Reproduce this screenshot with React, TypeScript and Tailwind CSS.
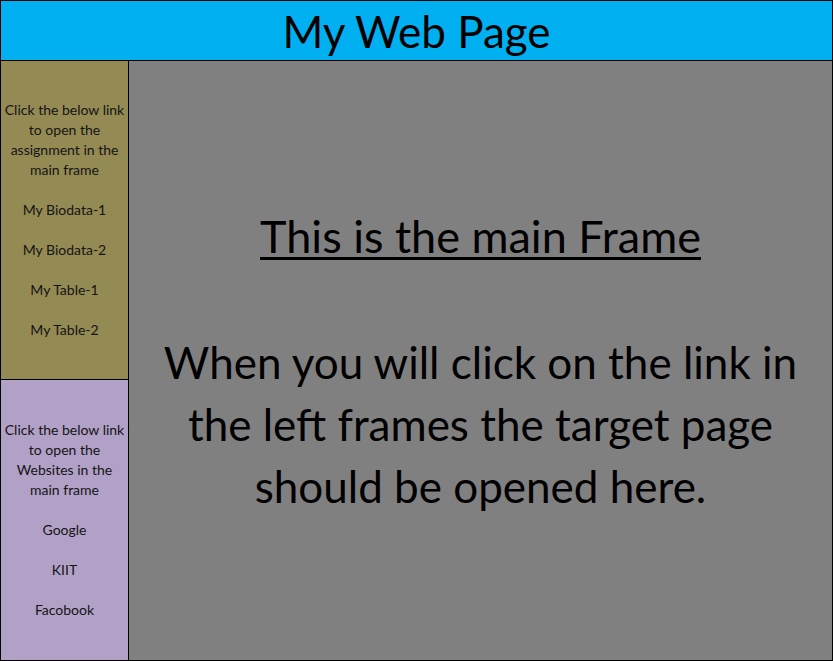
export default function App() {
  const font = { fontFamily: 'Lato, "Open Sans", sans-serif' };
  return (
    <div style={font} className="w-[833px] h-[661px] flex flex-col border border-black bg-[#808080] text-black box-border">
      <div className="h-[60px] shrink-0 bg-[#00B0F0] border-b border-black flex items-center justify-center">
        <span className="text-[44px] leading-none">My Web Page</span>
      </div>
      <div className="flex-1 flex min-h-0">
        <div className="w-[128px] shrink-0 border-r border-black flex flex-col text-[14px] leading-[20px] text-[#141414]">
          <div className="h-[319px] shrink-0 bg-[#948A54] border-b border-black flex flex-col items-center justify-center text-center gap-5">
            <p>Click the below link<br />to open the<br />assignment in the<br />main frame</p>
            <p>My Biodata-1</p>
            <p>My Biodata-2</p>
            <p>My Table-1</p>
            <p>My Table-2</p>
          </div>
          <div className="flex-1 bg-[#B2A1C7] flex flex-col items-center justify-center text-center gap-5">
            <p>Click the below link<br />to open the<br />Websites in the<br />main frame</p>
            <p>Google</p>
            <p>KIIT</p>
            <p>Facobook</p>
          </div>
        </div>
        <div className="flex-1 flex flex-col items-center justify-center text-center pt-[8px]">
          <p className="text-[45px] leading-[48px] underline decoration-[3px] underline-offset-[4px]">This is the main Frame</p>
          <p className="mt-[71px] text-[44px] leading-[62px]">When you will click on the link in<br />the left frames the target page<br />should be opened here.</p>
        </div>
      </div>
    </div>
  );
}
